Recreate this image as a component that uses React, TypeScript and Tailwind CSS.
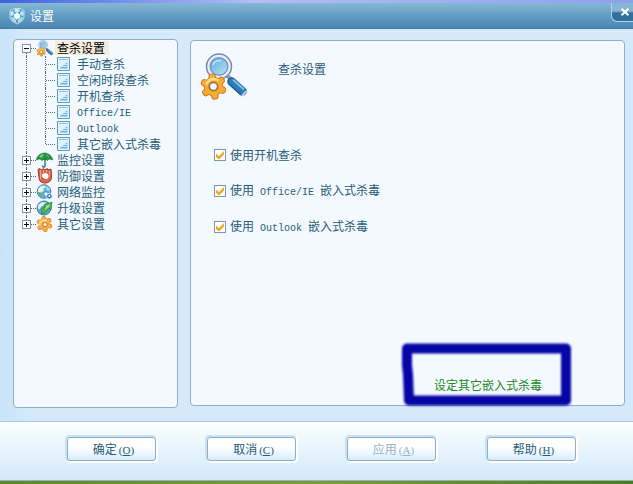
import { Fragment } from "react";

const tree = [
  {
    label: "查杀设置",
    icon: ScanIcon,
    selected: true,
    children: ["手动查杀", "空闲时段查杀", "开机查杀", "Office/IE", "Outlook", "其它嵌入式杀毒"],
  },
  { label: "监控设置", icon: UmbrellaIcon },
  { label: "防御设置", icon: GloveIcon },
  { label: "网络监控", icon: NetworkIcon },
  { label: "升级设置", icon: UpdateIcon },
  { label: "其它设置", icon: CogIcon },
];

const options = ["使用开机查杀", "使用 Office/IE 嵌入式杀毒", "使用 Outlook 嵌入式杀毒"];

const buttons = [
  { label: "确定", hotkey: "O" },
  { label: "取消", hotkey: "C" },
  { label: "应用", hotkey: "A", disabled: true },
  { label: "帮助", hotkey: "H" },
];

// Latin runs are half the width of a CJK glyph
function Label({ text }: { text: string }) {
  return (
    <span className="whitespace-pre">
      {text.split(/([\x20-\x7e]+)/).map((part, i) =>
        i % 2 ? (
          <span key={i} className="font-['Liberation_Mono',monospace] text-[10px]">
            {part}
          </span>
        ) : (
          <Fragment key={i}>{part}</Fragment>
        )
      )}
    </span>
  );
}

function ShieldIcon() {
  return (
    <svg width="16" height="18" viewBox="0 0 16 18">
      <path d="M5 1.500h6l4 2V10c0 3-3 5-7 7-4-2-7-4-7-7V3.500z" fill="#5a9fcd" stroke="#b5dff3" />
      <path d="M6 2h4l1 2-3 2-3-2zM1.500 4.500L4 4l1 3-2 2-1.500-1zM14.500 4.500L12 4l-1 3 2 2 1.500-1z" fill="#c6e9f8" />
      <path d="M8 5.500l3 2v3l-3 2-3-2v-3z" fill="#f3fcff" />
      <path d="M2 10l2.500.5L7 13v3c-3-1-5-3-5-6zM14 10l-2.500.5L9 13v3c3-1 5-3 5-6z" fill="#a9dcf2" />
    </svg>
  );
}

// six-toothed wheel centred on the origin, about 26 units across
function Wheel({ fill, edge }: { fill: string; edge: string }) {
  const teeth = "M0-9.500V9.500M-8.300-4.800L8.300 4.800M-8.300 4.800L8.300-4.800";
  return (
    <g transform="rotate(-8)" strokeLinecap="round">
      <path d={teeth} stroke={edge} strokeWidth="7.500" />
      <circle r="9.700" fill={edge} />
      <path d={teeth} stroke={fill} strokeWidth="5.500" />
      <circle r="8.800" fill={fill} />
    </g>
  );
}

function ScanIcon({ size = 17 }: { size?: number }) {
  return (
    <svg width={size} height={size} viewBox="0 0 48 48" className="shrink-0">
      <defs>
        <linearGradient id="lens" x1="0" y1="0" x2="1" y2="1">
          <stop offset="0" stopColor="#5ba9db" />
          <stop offset="1" stopColor="#b9e6fb" />
        </linearGradient>
      </defs>
      <path d="M27 22l5 4" stroke="#8a9dbb" strokeWidth="4" />
      <path d="M32.500 28.500L43.500 38.500" stroke="#1c5488" strokeWidth="8.500" strokeLinecap="round" />
      <path d="M32.500 28.500L43.500 38.500" stroke="#2b7fb9" strokeWidth="6" strokeLinecap="round" />
      <path d="M34 26.500L45 36.500" stroke="#7fc3e8" strokeWidth="2" />
      <path d="M43 43l4.500-5" stroke="#b9cde0" strokeWidth="2" />
      <circle cx="20" cy="13.500" r="12.500" fill="#e9effa" stroke="#7389b0" strokeWidth="1.500" />
      <circle cx="20" cy="13.500" r="8.800" fill="url(#lens)" stroke="#7c94be" strokeWidth="1.500" />
      <path d="M14 12c1-4 5-5 8-4" fill="none" stroke="#c6e7fa" strokeWidth="1.500" />
      <g transform="translate(14.500 33.500)">
        <Wheel fill="#f9ac33" edge="#d17c1c" />
        <path d="M-7-2c1-5 7-7 12-4" fill="none" stroke="#ffd983" strokeWidth="2.500" />
        <circle r="4.200" fill="#f3f9fe" stroke="#9b7444" strokeWidth="1.800" />
      </g>
    </svg>
  );
}

function UmbrellaIcon() {
  return (
    <svg width="17" height="16" viewBox="0 0 17 16" className="shrink-0">
      <path d="M9 7v7c0 2-3 1-2.500-.5" fill="none" stroke="#347060" strokeWidth="1.400" />
      <path d="M.5 8C1 4 4 1.500 8.500 1 13 1.500 16 4 16.500 8c-2-1.500-4-1-5 .5C10 7 7.500 7 6 8.500 4.500 6.500 2 6.500.5 8z" fill="#24953f" stroke="#116b35" strokeWidth=".7" />
      <path d="M3 5c1-2 3-3 5-3L6 6zM10 2c2 1 3 2 3 4" fill="#7bd27b" />
    </svg>
  );
}

function GloveIcon() {
  return (
    <svg width="17" height="16" viewBox="0 0 17 16" className="shrink-0">
      <path d="M2 1.500l2-1L5.500 2 7 .5 9 2l2-1.500L13 2l2-1 .5 8c0 4-3 6-6.500 6-5 0-6-3-6-6z" fill="#d9634b" stroke="#933a2e" />
      <path d="M4.500 2v9M7.500 2v3M10.500 2v3M13.500 3v6" stroke="#ffa584" />
      <path d="M6 6c3-2.500 7-1 7 2 0 3-2 4-4.500 3S4.500 8 6 6z" fill="#fff" stroke="#a84a35" strokeWidth=".7" />
    </svg>
  );
}

function NetworkIcon() {
  return (
    <svg width="17" height="16" viewBox="0 0 17 16" className="shrink-0">
      <circle cx="8" cy="7.500" r="6.800" fill="#62b3e0" stroke="#4483b1" />
      <path d="M2 5l3-3 4-.5 1 2-3 1 1 2-3 2-3-.5z" fill="#e4f5d8" />
      <path d="M2 8l3 1 1 4-3-2z" fill="#67b158" />
      <path d="M11 2l3 3-1 2-3-1z" fill="#a6dcf0" />
      <circle cx="10" cy="10" r="2.300" fill="#eaf8ff" stroke="#3c84b8" />
      <circle cx="13.300" cy="12.300" r="2.800" fill="#2f73b2" stroke="#d8eeff" />
      <circle cx="13.300" cy="12" r="1" fill="#fff" />
    </svg>
  );
}

function UpdateIcon() {
  return (
    <svg width="17" height="16" viewBox="0 0 17 16" className="shrink-0">
      <circle cx="8" cy="8" r="7" fill="#5aaad4" stroke="#397e9e" />
      <path d="M2 5l4-3 4 .5-2 3-3 1-1 3-2-1z" fill="#d9f2e4" />
      <path d="M5 9l4-2-1-2 8-3-1 8-2-2c-2 4-4 6-8 6 1-1 1-3 0-5z" fill="#4db351" stroke="#267d3a" strokeWidth=".7" />
      <path d="M10 6l4-2-1 3-4 3z" fill="#a5e391" />
    </svg>
  );
}

function CogIcon() {
  return (
    <svg width="17" height="16" viewBox="-14 -13 28 26" className="shrink-0">
      <Wheel fill="#f9ac4a" edge="#dd812b" />
      <path d="M-8 2c0-7 6-10 12-7" fill="none" stroke="#ffdc9a" strokeWidth="3" />
      <circle cx="1" cy="1" r="3.500" fill="#fff4e0" stroke="#bf6a29" strokeWidth="1.500" />
    </svg>
  );
}

function PageIcon() {
  return (
    <svg width="13" height="14" viewBox="0 0 13 14" className="shrink-0">
      <path d="M.5.5h12v13H.5z" fill="#e2f3ff" stroke="#5b9bc6" />
      <path d="M2 2.500h9" stroke="#8cc1e5" />
      <path d="M10.500 5v6.500H2.500z" fill="#74b1dc" />
      <path d="M3 9.500h7.500M6 7.500h4.500" stroke="#d2eafa" />
    </svg>
  );
}

function TitleBar() {
  return (
    <header className="flex h-[26px] items-center border-b border-[#457ca5] bg-linear-to-b from-[#86b8d4] via-[#669fc5] via-45% to-[#4b85b2] pl-[9px]">
      <ShieldIcon />
      <h1 className="ml-[5px] flex-1 text-white">设置</h1>
      <button
        aria-label="关闭"
        className="flex h-[19px] w-[22px] items-center justify-center self-start rounded-bl-md border-b border-l border-[#a7d5ec] bg-linear-to-b from-[#88b5d3] from-45% to-[#33709e] to-55%"
      >
        <svg width="10" height="8" viewBox="0 0 10 8" className="ml-1">
          <path d="M1.500.8l7 6.400M8.500.8l-7 6.400" stroke="#fff" strokeWidth="2" />
        </svg>
      </button>
    </header>
  );
}

function SettingsTree() {
  return (
    <nav className="w-[165px] shrink-0 rounded-[4px] border border-[#8dafc9] bg-[#f3f9fe] pl-2">
      <ul>
        {tree.map(({ label, icon: Icon, selected, children }, i) => (
          <li key={label}>
            <div className="flex h-4 items-center">
              <div className="flex h-4 w-[9px] flex-col items-center">
                <span className={`h-1 border-l border-dotted ${i ? "border-[#666]" : "border-transparent"}`} />
                <button
                  aria-label={label}
                  aria-expanded={!!children}
                  className="flex size-[9px] shrink-0 items-center justify-center border border-[#8494a2] bg-white"
                >
                  <svg width="5" height="5" viewBox="0 0 5 5">
                    <path d={children ? "M0 2.500h5" : "M0 2.500h5M2.500 0v5"} stroke="#111" />
                  </svg>
                </button>
                {i < tree.length - 1 && <span className="h-[3px] border-l border-dotted border-[#666]" />}
              </div>
              <span className="w-[5px] border-t border-dotted border-[#666]" />
              <Icon />
              <a href="#" className={`ml-[2px] px-[2px] leading-[14px] ${selected ? "bg-[#f4eddd] pr-1 text-black" : ""}`}>
                {label}
              </a>
            </div>
            {children && (
              <ul className="ml-1 border-l border-dotted border-[#666] pl-[18px]">
                {children.map((child) => (
                  <li key={child} className="group flex h-4 items-center">
                    <span className="h-4 border-l border-dotted border-[#666] group-last:h-2 group-last:self-start" />
                    <span className="mr-[2px] w-[9px] border-t border-dotted border-[#666]" />
                    <PageIcon />
                    <a href="#" className="ml-[7px] leading-4">
                      <Label text={child} />
                    </a>
                  </li>
                ))}
              </ul>
            )}
          </li>
        ))}
      </ul>
    </nav>
  );
}

function SettingsPanel() {
  return (
    <main className="mt-px mb-[2px] flex flex-1 flex-col rounded-[4px] border border-[#8dafc9] bg-[#f3f9fe] pt-3 pl-2">
      <div className="flex items-start">
        <ScanIcon size={48} />
        <h2 className="ml-[31px] pt-2 leading-4">查杀设置</h2>
      </div>
      <div className="mt-[46px] ml-[15px] flex flex-col gap-5">
        {options.map((option) => (
          <label key={option} className="flex h-4 items-center gap-1">
            <span className="grid shrink-0">
              <input
                type="checkbox"
                defaultChecked
                className="peer size-3 appearance-none border border-[#7898bb] bg-white [grid-area:1/1]"
              />
              <svg
                width="12"
                height="12"
                viewBox="0 0 12 12"
                className="pointer-events-none invisible [grid-area:1/1] peer-checked:visible"
              >
                <path d="M2 4.500l3 2.500 5-5v3.500L5 10.500 2 8z" fill="#f3a91b" />
              </svg>
            </span>
            <Label text={option} />
          </label>
        ))}
      </div>
      <div className="relative mt-auto mr-[82px] mb-3 self-end leading-4">
        <a href="#" className="text-[#23891b]">
          设定其它嵌入式杀毒
        </a>
        {/* marker outline around the link */}
        <svg
          width="174"
          height="68"
          viewBox="0 0 174 68"
          className="pointer-events-none absolute -top-[36px] -left-[34px] max-w-none"
        >
          <path
            d="M7 7.500h159v52H9l-1-26-1-9z"
            fill="none"
            stroke="#0605a5"
            strokeWidth="10"
            strokeLinejoin="round"
            className="blur-[1px]"
          />
        </svg>
      </div>
    </main>
  );
}

export default function App() {
  return (
    <div className="flex min-h-screen flex-col bg-[#d3e9f9] font-['Noto_Sans_CJK_SC',sans-serif] text-[12px] leading-4 text-[#285d77]">
      <div className="h-[3px] bg-linear-to-r from-[#3f61dd] via-[#b3bdf6] via-40% to-[#8ca1ee]" />
      <TitleBar />
      <div className="flex flex-1 gap-3 bg-linear-to-r from-[#c9e3f7] to-[#d4eafb] to-5% pt-[10px] pr-2 pb-[13px] pl-[13px]">
        <SettingsTree />
        <SettingsPanel />
      </div>
      <footer className="flex h-[60px] items-start justify-between border-t border-b border-t-[#a9c7dd] border-b-[#8fb2ca] bg-linear-to-b from-[#fbfeff] to-[#d3e9f9] pt-[15px] pr-[57px] pl-[67px]">
        {buttons.map(({ label, hotkey, disabled }) => (
          <button
            key={hotkey}
            disabled={disabled}
            className="h-6 w-[89px] rounded-[3px] border border-[#8cb0cb] bg-linear-to-b from-white from-40% to-[#d8edfc] pl-1 shadow-[-1px_-1px_0_1px_#cbe2f2,1px_1px_0_1px_#ffffff] disabled:text-[#9bb3c4]"
          >
            {label}
            <span className="ml-[2px] font-['Liberation_Serif',serif] text-[11px]">
              (<u>{hotkey}</u>)
            </span>
          </button>
        ))}
      </footer>
      <div className="h-[3px] bg-linear-to-r from-[#5d8c1c] via-[#7c9e2c] to-[#4b7e18]" />
    </div>
  );
}
